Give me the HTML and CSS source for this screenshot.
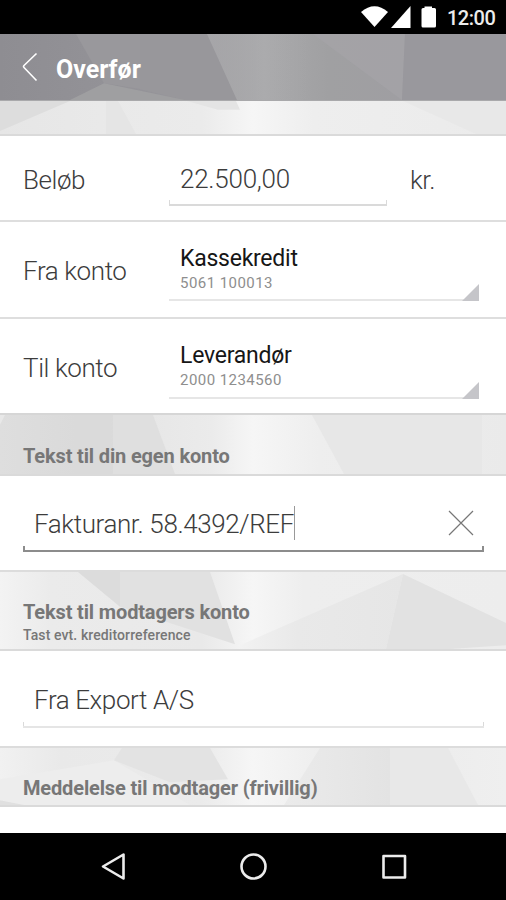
FILE: index.html
```html
<!DOCTYPE html>
<html lang="da">

  <head>
    <meta charset="UTF-8">
    <meta name="viewport" content="width=device-width, initial-scale=1.0">
    <title>Overfør</title>
    <link rel="stylesheet" href="styles.css">
  </head>

  <body>
    <div class="statusbar">
      <svg class="status-icons" width="76" height="34" viewBox="0 0 76 34">
        <path fill="#fff" d="M0 12 Q13.500 0.500 27 12 L13.500 27 Z" />
        <path fill="#fff" d="M30 28 L49.500 6 V28 Z" />
        <path fill="#fff" d="M63.500 6.500 H71 V8 H73.500 Q75 8 75 9.500 V26 Q75 27.500 73.500 27.500 H62 Q60.500 27.500 60.500 26 V9.500 Q60.500 8 62 8 H63.500 Z" />
      </svg>
      <span class="clock">12:00</span>
    </div>

    <div class="band header">
      <svg class="facets" viewBox="0 0 506 67" preserveAspectRatio="none">
        <defs>
          <linearGradient id="head">
            <stop offset="0" stop-color="#8e8d92" />
            <stop offset=".3" stop-color="#959499" />
            <stop offset=".42" stop-color="#99989c" />
            <stop offset=".52" stop-color="#a9a9ab" />
            <stop offset=".65" stop-color="#a0a0a2" />
            <stop offset=".8" stop-color="#9f9ea2" />
            <stop offset="1" stop-color="#9a999e" />
          </linearGradient>
          <linearGradient id="shine">
            <stop offset="0" stop-color="#b0b0b2" stop-opacity=".6" />
            <stop offset="1" stop-color="#b0b0b2" stop-opacity="0" />
          </linearGradient>
        </defs>
        <rect width="506" height="67" fill="url(#head)" />
        <path fill="#99989c" d="M76 0 H140 L142 56 L104 50 Z" />
        <path fill="#98979b" d="M140 0 H207 L237 67 H185 L140 56 Z" />
        <path fill="#9f9fa1" d="M70 67 L104 50 L185 67 Z" />
        <path fill="url(#shine)" d="M207 0 H310 V67 H237 Z" />
        <path fill="#a5a4a8" opacity=".7" d="M313 0 H405 L402 67 Z" />
        <path fill="#99989d" d="M405 0 H506 V67 H402 Z" />
      </svg>
      <div class="header-content">
        <svg class="back" width="16" height="30" viewBox="0 0 16 30">
          <path d="M14.500 1.500 L2 13.500 Q1 14.500 2 15.500 L14.500 28.500" fill="none" stroke="#fff" stroke-width="1.600" />
        </svg>
        <h1 class="title">Overfør</h1>
      </div>
    </div>

    <div class="band spacer">
      <svg class="facets" viewBox="0 0 506 34" preserveAspectRatio="none">
        <defs>
          <linearGradient id="light">
            <stop offset="0" stop-color="#e6e6e6" />
            <stop offset=".2" stop-color="#e9e9e9" />
            <stop offset=".4" stop-color="#ebebeb" />
            <stop offset=".5" stop-color="#f6f6f6" />
            <stop offset=".62" stop-color="#eeeeee" />
            <stop offset="1" stop-color="#ebebeb" />
          </linearGradient>
        </defs>
        <rect width="506" height="34" fill="url(#light)" />
        <path fill="#dddddd" d="M0 0 H70 L0 31 Z" />
        <path fill="#e5e5e5" d="M106 0 H118 L136 34 H106 Z" />
        <path fill="#e4e4e4" d="M187 0 H236 L240 9 H218 Z" />
        <path fill="#e8e8e8" d="M403 0 H506 V34 H476 Z" />
      </svg>
    </div>

    <div class="row row-amount">
      <label class="label">Beløb</label>
      <div class="amount bracket"><span class="amount-text">22.500,00</span></div>
      <span class="unit">kr.</span>
    </div>

    <div class="row row-from">
      <label class="label">Fra konto</label>
      <div class="select">
        <div class="select-text">
          <span class="name">Kassekredit</span>
          <span class="number">5061 100013</span>
        </div>
        <svg class="corner" width="17" height="17" viewBox="0 0 17 17"><path fill="#c5c5c9" d="M17 0 V17 H0 Z" /></svg>
      </div>
    </div>

    <div class="row row-to">
      <label class="label">Til konto</label>
      <div class="select">
        <div class="select-text">
          <span class="name">Leverandør</span>
          <span class="number">2000 1234560</span>
        </div>
        <svg class="corner" width="17" height="17" viewBox="0 0 17 17"><path fill="#c5c5c9" d="M17 0 V17 H0 Z" /></svg>
      </div>
    </div>

    <div class="band own">
      <svg class="facets" viewBox="0 0 506 61" preserveAspectRatio="none">
        <defs>
          <linearGradient id="own">
            <stop offset="0" stop-color="#dedede" />
            <stop offset=".15" stop-color="#dadada" />
            <stop offset=".22" stop-color="#dadada" />
            <stop offset=".3" stop-color="#e7e7e7" />
            <stop offset=".42" stop-color="#ebebeb" />
            <stop offset=".5" stop-color="#f6f6f6" />
            <stop offset=".63" stop-color="#eeeeee" />
            <stop offset="1" stop-color="#eaeaea" />
          </linearGradient>
        </defs>
        <rect width="506" height="61" fill="url(#own)" />
        <path fill="#e8e8e8" d="M0 0 H5 L0 10 Z" />
        <path fill="#dfdfdf" d="M113 0 H153 L175 61 H113 Z" />
        <path fill="#e7e7e7" d="M312 0 H482 V61 H344 Z" />
      </svg>
      <div class="band-text">
        <h2 class="section-title">Tekst til din egen konto</h2>
      </div>
    </div>

    <div class="field field-own">
      <div class="input bracket active">
        <span class="input-text">Fakturanr. 58.4392/REF</span>
        <span class="caret"></span>
        <svg class="clear" width="26" height="26" viewBox="0 0 26 26">
          <path d="M1 1 L25 25 M25 1 L1 25" stroke="#777" stroke-width="1.200" />
        </svg>
      </div>
    </div>

    <div class="band receiver">
      <svg class="facets" viewBox="0 0 506 80" preserveAspectRatio="none">
        <defs>
          <linearGradient id="rec">
            <stop offset="0" stop-color="#f3f3f3" />
            <stop offset=".1" stop-color="#ebebeb" />
            <stop offset=".4" stop-color="#e9e9e9" />
            <stop offset=".5" stop-color="#f6f6f6" />
            <stop offset=".6" stop-color="#eeeeee" />
            <stop offset="1" stop-color="#ededed" />
          </linearGradient>
          <linearGradient id="wedge">
            <stop offset="0" stop-color="#f2f2f2" />
            <stop offset=".35" stop-color="#e9e9e9" />
            <stop offset="1" stop-color="#e6e6e6" />
          </linearGradient>
        </defs>
        <rect width="506" height="80" fill="url(#rec)" />
        <path fill="#dcdcdc" d="M78 0 H120 V36 Z" />
        <path fill="#e1e1e1" d="M120 0 H210 L235 75 L120 36 Z" />
        <path fill="url(#wedge)" d="M240 76 L403 2 L386 80 H240 Z" />
        <path fill="#e2e2e2" d="M403 2 L506 53 V76 L450 80 H386 Z" />
      </svg>
      <div class="band-text">
        <h2 class="section-title">Tekst til modtagers konto</h2>
        <p class="section-hint">Tast evt. kreditorreference</p>
      </div>
    </div>

    <div class="field field-rec">
      <div class="input bracket">
        <span class="input-text">Fra Export A/S</span>
      </div>
    </div>

    <div class="band message">
      <svg class="facets" viewBox="0 0 506 60" preserveAspectRatio="none">
        <defs>
          <linearGradient id="msg">
            <stop offset="0" stop-color="#f1f1f1" />
            <stop offset=".12" stop-color="#e9e9e9" />
            <stop offset=".4" stop-color="#ebebeb" />
            <stop offset=".5" stop-color="#f6f6f6" />
            <stop offset=".7" stop-color="#eaeaea" />
            <stop offset="1" stop-color="#efefef" />
          </linearGradient>
          <linearGradient id="slope">
            <stop offset="0" stop-color="#ebebeb" />
            <stop offset="1" stop-color="#e3e3e3" />
          </linearGradient>
        </defs>
        <rect width="506" height="60" fill="url(#msg)" />
        <path fill="#ededed" d="M0 33 L114 13 L190 60 H24 L0 55 Z" />
        <path fill="#e0e0e0" d="M0 55 L24 60 H0 Z" />
        <path fill="#e3e3e3" d="M122 0 H210 L228 33 L170 36 L114 13 Z" />
        <path fill="url(#slope)" d="M320 0 H390 V60 H284 Z" />
        <path fill="#e8e8e8" d="M390 0 H448 L478 60 H390 Z" />
      </svg>
      <div class="band-text">
        <h2 class="section-title">Meddelelse til modtager (frivillig)</h2>
      </div>
    </div>

    <div class="rest"></div>

    <div class="navbar">
      <svg width="506" height="67" viewBox="0 0 506 67" fill="none" stroke="#ececec" stroke-width="2.600" stroke-linejoin="round">
        <path d="M123.500 21.500 V45.500 L103 33.500 Z" />
        <circle cx="253.500" cy="33.500" r="12" />
        <rect x="383.500" y="23" width="21.500" height="21.500" />
      </svg>
    </div>
  </body>
</html>
```

FILE: styles.css
```css
* {
    box-sizing: border-box;
  }

  body {
    font-family: Roboto, sans-serif;
    display: flex;
    flex-direction: column;
    width: 506px;
    height: 900px;
    margin: 0;
    overflow: hidden;
    background-color: white;
    color: #3c3c3c;
    white-space: nowrap;
  }

  h1, h2, p {
    margin: 0;
  }

  svg {
    display: block;
    flex: none;
  }

  .statusbar {
    height: 34px;
    flex: none;
    display: flex;
    align-items: center;
    justify-content: flex-end;
    gap: 10px;
    padding-right: 10px;
    background-color: black;
  }

  .clock {
    width: 49px;
    padding-top: 2px;
    font-size: 20px;
    font-weight: 500;
    line-height: 24px;
    letter-spacing: -0.5px;
    color: #ececec;
  }

  /* the facets and the text share one grid cell */
  .band {
    display: grid;
    flex: none;
    border-bottom: 2px solid #dadada;
  }

  .facets, .header-content, .band-text {
    grid-area: 1 / 1;
  }

  .facets {
    width: 100%;
    height: 100%;
  }

  .header {
    height: 67px;
    border-bottom: 1px solid #a9a9ab;
  }

  .header-content {
    display: flex;
    align-items: center;
    gap: 18px;
    padding-left: 22px;
  }

  .title {
    font-size: 25px;
    font-weight: 700;
    line-height: 30px;
    padding-top: 5px;
    color: white;
  }

  .spacer {
    height: 35px;
  }

  .row {
    display: flex;
    flex: none;
    padding-left: 23px;
    border-bottom: 2px solid #dedede;
  }

  .row-amount {
    height: 86px;
  }

  .row-from {
    height: 97px;
  }

  .row-to {
    height: 96px;
    border-bottom-color: #d6d6d6;
  }

  .label, .unit, .amount-text, .input-text {
    font-size: 26px;
    font-weight: 300;
    line-height: 30px;
    letter-spacing: -0.4px;
  }

  .amount-text {
    letter-spacing: -0.25px;
  }

  .label {
    width: 146px;
    padding-top: 34px;
  }

  .row-amount .label {
    padding-top: 29px;
  }

  /* underline with short upturned ends */
  .bracket {
    border-bottom: 2px solid #dadada;
    background-image: linear-gradient(#dadada, #dadada), linear-gradient(#dadada, #dadada);
    background-size: 1px 4px;
    background-position: left bottom, right bottom;
    background-repeat: no-repeat;
  }

  .amount {
    width: 218px;
    height: 70px;
    padding: 28px 0 0 11px;
  }

  .unit {
    padding: 29px 0 0 23px;
  }

  .select {
    display: flex;
    align-items: flex-end;
    justify-content: space-between;
    width: 310px;
    height: 79px;
    border-bottom: 2px solid #e6e6e6;
  }

  .row-to .select {
    height: 80px;
  }

  .select-text {
    display: flex;
    flex-direction: column;
    height: 100%;
    padding: 23px 0 0 11px;
  }

  .corner {
    margin-bottom: -2px;
  }

  .name {
    font-size: 23px;
    line-height: 28px;
    letter-spacing: -0.25px;
    color: #161616;
  }

  .number {
    font-size: 15px;
    line-height: 20px;
    letter-spacing: 0.45px;
    color: #8e8e8e;
  }

  .own {
    height: 61px;
  }

  .receiver {
    height: 79px;
  }

  .message {
    height: 59px;
  }

  .band-text {
    padding: 28px 0 0 23px;
    color: #777;
  }

  .own .band-text {
    padding-top: 29px;
  }

  .section-title {
    font-size: 20px;
    font-weight: 700;
    line-height: 24px;
    letter-spacing: -0.15px;
  }

  .section-hint {
    font-size: 14px;
    font-weight: 500;
    line-height: 22px;
    letter-spacing: 0.1px;
  }

  .field {
    flex: none;
    padding: 0 22px 0 23px;
    border-bottom: 2px solid #dcdcdc;
  }

  .field-own {
    height: 96px;
  }

  .field-rec {
    height: 97px;
  }

  .input {
    display: flex;
    align-items: flex-start;
    height: 76px;
    padding: 33px 10px 0 11px;
  }

  .field-rec .input {
    height: 77px;
    padding-top: 34px;
    border-bottom-color: #e5e5e5;
  }

  .active {
    border-bottom-color: #8c8c8c;
    background-image: linear-gradient(#8c8c8c, #8c8c8c), linear-gradient(#8c8c8c, #8c8c8c);
    background-size: 2px 4px;
  }

  .caret {
    width: 1px;
    height: 34px;
    margin-top: -3px;
    background-color: #999;
  }

  .clear {
    margin-top: 1px;
    margin-left: auto;
  }

  .rest {
    flex: 1;
  }

  .navbar {
    height: 67px;
    flex: none;
    background-color: black;
  }
```
